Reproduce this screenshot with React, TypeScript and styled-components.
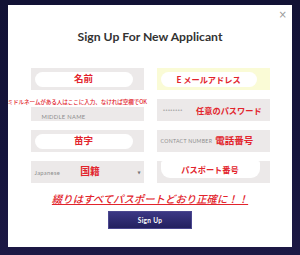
import React from "react";
import styled, { createGlobalStyle, css } from "styled-components";

const GlobalStyle = createGlobalStyle`
  html, body { margin: 0; padding: 0; }
  body {
    width: 300px;
    height: 255px;
    overflow: hidden;
    background: linear-gradient(180deg, #121235 0%, #15143c 60%, #1c1844 100%);
    font-family: Lato, "Noto Sans CJK JP", sans-serif;
  }
`;

const Page = styled.div`
  box-sizing: border-box;
  width: 300px;
  height: 255px;
  padding: 5px 8px 0;
`;

const Modal = styled.div`
  position: relative;
  height: 242px;
  background: #ffffff;
  display: flex;
  flex-direction: column;
  align-items: center;
`;

const Close = styled.span`
  position: absolute;
  right: 5px;
  top: 5px;
  font-size: 10px;
  line-height: 10px;
  color: #9a9a9a;
  font-family: "DejaVu Sans", sans-serif;
`;

const Title = styled.h1`
  margin: 25px 0 0;
  font-family: Lato, sans-serif;
  font-weight: 700;
  font-size: 12.2px;
  line-height: 14px;
  color: #333333;
`;

const Grid = styled.div`
  margin-top: 24px;
  display: grid;
  grid-template-columns: 113px 113px;
  grid-auto-rows: 22px;
  column-gap: 13px;
  row-gap: 9px;
`;

const Field = styled.div<{ $tone?: "gray" | "yellow" }>`
  position: relative;
  box-sizing: border-box;
  display: flex;
  align-items: center;
  padding: 0 4px;
  background: ${(p) => (p.$tone === "yellow" ? "#fafbd6" : "#ece9e9")};
`;

const Pill = styled.div<{ $right?: number; $tall?: boolean }>`
  box-sizing: border-box;
  height: ${(p) => (p.$tall ? "17px" : "15px")};
  flex: 1;
  margin-right: ${(p) => p.$right ?? 8}px;
  background: #ffffff;
  border-radius: 8px;
  display: flex;
  align-items: center;
  justify-content: center;
  ${(p) =>
    p.$tall &&
    css`
      align-self: flex-start;
      border-radius: 2px 2px 9px 9px;
    `}
`;

const Red = styled.span<{ $size: number }>`
  font-family: "Noto Sans CJK JP", sans-serif;
  font-weight: 700;
  font-size: ${(p) => p.$size}px;
  line-height: 1;
  color: #e2242c;
  white-space: nowrap;
`;

const Hint = styled.span<{ $size?: number }>`
  font-family: Lato, sans-serif;
  font-size: ${(p) => p.$size ?? 5.5}px;
  letter-spacing: 0.3px;
  color: #8d8d8d;
  white-space: nowrap;
`;

const Dots = styled.span`
  font-family: "DejaVu Sans", sans-serif;
  font-size: 5px;
  color: #9a9a9a;
  letter-spacing: -0.5px;
  margin: 0 14px 0 2px;
`;

const Caret = styled.span`
  margin-left: auto;
  margin-right: -1px;
  font-size: 4px;
  color: #777;
  font-family: "DejaVu Sans", sans-serif;
`;

const Annotation = styled.div`
  position: absolute;
  left: -23px;
  top: -2px;
  width: 142px;
  height: 10px;
  background: #ffffff;
  font-family: "Noto Sans CJK JP", sans-serif;
  font-weight: 500;
  font-size: 5.6px;
  line-height: 10px;
  color: #e2242c;
  white-space: nowrap;
  letter-spacing: -0.1px;
`;

const MiddleLabel = styled(Hint)`
  margin: 12px 0 0 7px;
`;

const Note = styled.p`
  margin: 9px 0 0;
  font-family: "Noto Sans CJK JP", sans-serif;
  font-weight: 500;
  font-style: italic;
  font-size: 10.4px;
  line-height: 14px;
  color: #e2242c;
  text-decoration: underline;
  text-underline-offset: 1px;
`;

const Button = styled.button`
  margin-top: 5px;
  width: 84px;
  height: 18px;
  border: 1px solid #4b478f;
  background: linear-gradient(180deg, #3b3784 0%, #23205f 100%);
  color: #ffffff;
  font-family: Lato, sans-serif;
  font-weight: 700;
  font-size: 6.5px;
  letter-spacing: 0.3px;
  padding: 0;
`;

export default function App() {
  return (
    <>
      <GlobalStyle />
      <Page>
        <Modal>
          <Close>×</Close>
          <Title>Sign Up For New Applicant</Title>
          <Grid>
            <Field>
              <Pill $right={7}>
                <Red $size={9.5}>名前</Red>
              </Pill>
            </Field>
            <Field $tone="yellow">
              <Pill $right={9}>
                <Red $size={8.2}>E メールアドレス</Red>
              </Pill>
            </Field>
            <Field>
              <Annotation>ミドルネームがある人はここに入力、なければ空欄でOK</Annotation>
              <MiddleLabel $size={5.8}>MIDDLE NAME</MiddleLabel>
            </Field>
            <Field>
              <Dots>••••••••</Dots>
              <Red $size={8.2}>任意のパスワード</Red>
            </Field>
            <Field>
              <Pill $right={7}>
                <Red $size={9.5}>苗字</Red>
              </Pill>
            </Field>
            <Field>
              <Hint $size={5.2}>CONTACT NUMBER</Hint>
              <Red $size={9.5} style={{ marginLeft: 3 }}>
                電話番号
              </Red>
            </Field>
            <Field>
              <Hint $size={5.8}>Japanese</Hint>
              <Red $size={9.8} style={{ marginLeft: 20 }}>
                国籍
              </Red>
              <Caret>▼</Caret>
            </Field>
            <Field>
              <Pill $right={6} $tall>
                <Red $size={8.2}>パスポート番号</Red>
              </Pill>
            </Field>
          </Grid>
          <Note>綴りはすべてパスポートどおり正確に！！</Note>
          <Button>Sign Up</Button>
        </Modal>
      </Page>
    </>
  );
}
